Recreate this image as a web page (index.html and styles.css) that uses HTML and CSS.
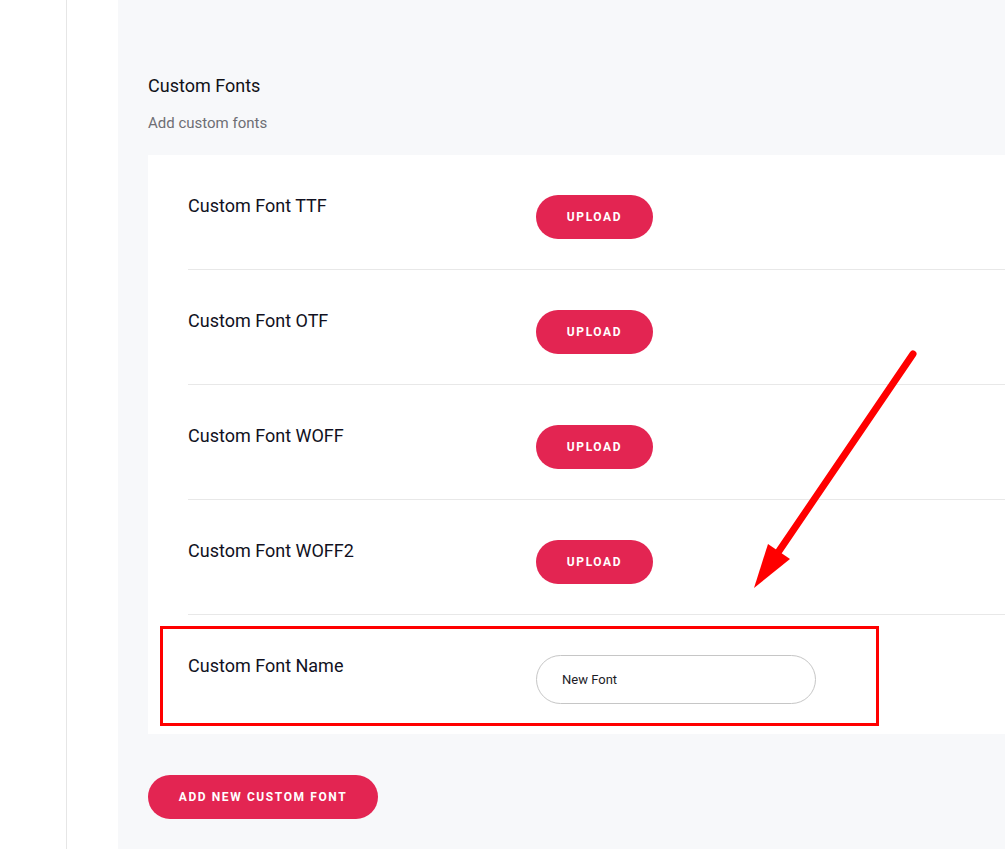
FILE: index.html
```html
<!DOCTYPE html>
<html>
<head>
<meta charset="utf-8">
<title>Custom Fonts</title>
<link rel="stylesheet" href="styles.css">
</head>
<body>
<div class="page">
  <div class="side"></div>
  <div class="gutter"></div>
  <div class="main">
    <h2 class="title">Custom Fonts</h2>
    <p class="desc">Add custom fonts</p>

    <div class="card">
      <div class="row">
        <div class="label">Custom Font TTF</div>
        <a href="javascript:;" class="btn">Upload</a>
      </div>
      <div class="row">
        <div class="label">Custom Font OTF</div>
        <a href="javascript:;" class="btn">Upload</a>
      </div>
      <div class="row">
        <div class="label">Custom Font WOFF</div>
        <a href="javascript:;" class="btn">Upload</a>
      </div>
      <div class="row">
        <div class="label">Custom Font WOFF2</div>
        <a href="javascript:;" class="btn">Upload</a>
      </div>
      <div class="row last">
        <div class="label">Custom Font Name</div>
        <input type="text" class="field" value="New Font">
        <div class="mark"></div>
      </div>
    </div>

    <a href="javascript:;" class="btn btn-add">Add new custom font</a>
  </div>

  <!-- annotation arrow -->
  <svg class="arrow" width="200" height="260" viewBox="0 0 200 260">
    <line x1="173" y1="14" x2="37" y2="214" stroke="#ff0000" stroke-width="7" stroke-linecap="round"/>
    <polygon points="14,248 28,204 50,219" fill="#ff0000"/>
  </svg>
</div>
</body>
</html>
```

FILE: styles.css
```css
* {margin:0; padding:0; box-sizing:border-box;}
html, body {height:100%; overflow:hidden;}
body {font-family:Roboto, "Liberation Sans", sans-serif; background:#fff; color:#111122;}

.page {display:flex; position:relative; width:1005px; height:849px;}
.side {width:67px; border-right:1px solid #e6e6e6;}
.gutter {width:51px;}
.main {flex:1; background:#f7f8fa; padding:75px 0 0 30px;}

.title {font-size:18px; font-weight:400; line-height:22px; color:#111118;}
.desc {font-size:15px; color:#6e6e74; margin-top:17px; line-height:18px;}

.card {background:#fff; margin-top:23px; padding-left:40px;}
.row {display:flex; align-items:flex-start; padding:40px 0 30px; border-bottom:1px solid #e8e8e8; position:relative;}
.row.last {border-bottom:0; padding-bottom:30px;}
.label {width:348px; font-size:18px; line-height:22px; color:#111122;}

.btn {display:inline-block; background:#e32552; color:#fff; text-decoration:none; text-transform:uppercase; font-size:12px; font-weight:700; letter-spacing:1.6px; border-radius:22px; height:44px; line-height:44px; text-align:center; width:117px;}
.btn-add {width:230px; margin-top:41px;}

.field {width:280px; height:49px; border:1px solid #c6c6c6; border-radius:25px; padding:0 25px; font-family:Roboto, "Liberation Sans", sans-serif; font-size:13px; color:#1d1d27; outline:none; background:#fff;}

.mark {position:absolute; left:-28px; top:11px; width:719px; height:100px; border:3px solid #ff0000;}

.arrow {position:absolute; left:740px; top:340px;}
```
